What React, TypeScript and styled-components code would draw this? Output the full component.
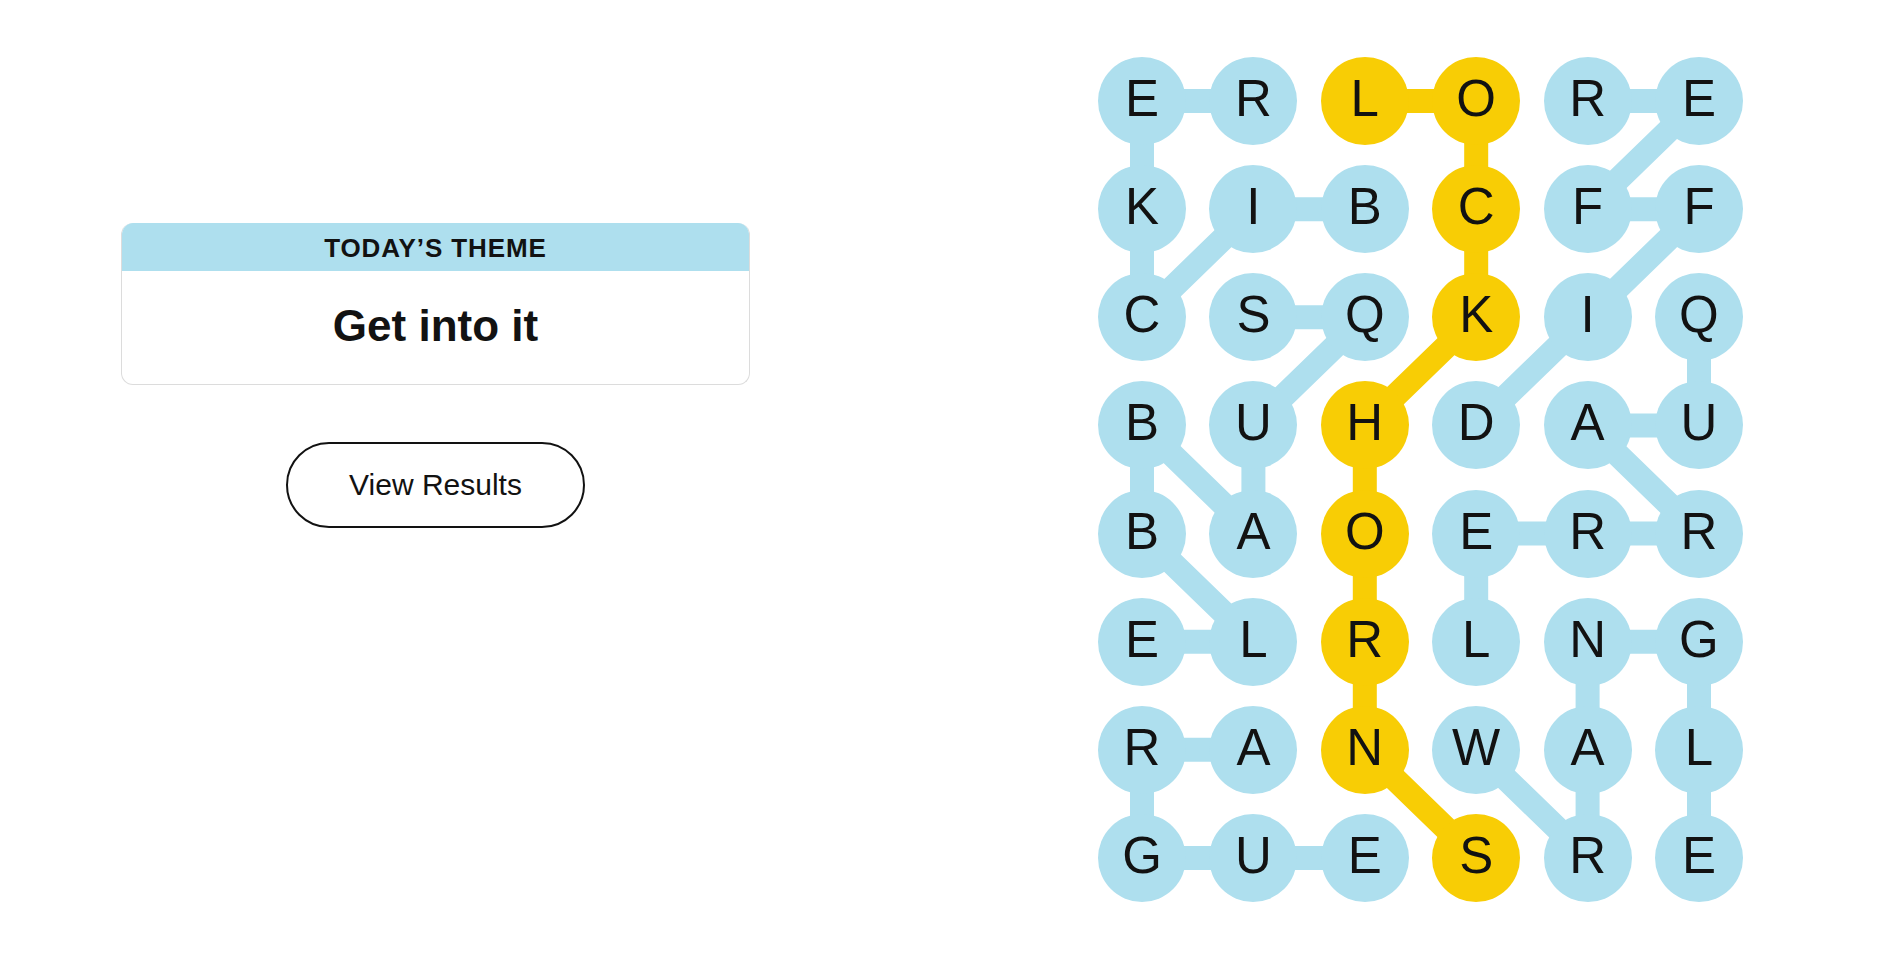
import styled, { createGlobalStyle } from 'styled-components';

const GlobalStyle = createGlobalStyle`
  html, body {
    margin: 0;
    padding: 0;
    background: #fff;
  }
  body {
    font-family: "Liberation Sans", Arial, sans-serif;
    color: #121212;
  }
`;

const BLUE = '#aedfee';
const YELLOW = '#f8cd05';

const CELL = 88;
const COL_GAP = 23.4;
const ROW_GAP = 20.14;

const ROWS = [
  'ERLORE',
  'KIBCFF',
  'CSQKIQ',
  'BUHDAU',
  'BAOERR',
  'ELRLNG',
  'RANWAL',
  'GUESRE',
];

const spangram: [number, number][] = [
  [0, 2], [0, 3], [1, 3], [2, 3], [3, 2], [4, 2], [5, 2], [6, 2], [7, 3],
];

const blueWords: [number, number][][] = [
  // BICKER
  [[1, 2], [1, 1], [2, 0], [1, 0], [0, 0], [0, 1]],
  // DIFFER
  [[3, 3], [2, 4], [1, 5], [1, 4], [0, 5], [0, 4]],
  // SQUABBLE
  [[2, 1], [2, 2], [3, 1], [4, 1], [3, 0], [4, 0], [5, 1], [5, 0]],
  // QUARREL
  [[2, 5], [3, 5], [3, 4], [4, 5], [4, 4], [4, 3], [5, 3]],
  // WRANGLE
  [[6, 3], [7, 4], [6, 4], [5, 4], [5, 5], [6, 5], [7, 5]],
  // ARGUE
  [[6, 1], [6, 0], [7, 0], [7, 1], [7, 2]],
];

const isSpangram = (r: number, c: number) =>
  spangram.some(([sr, sc]) => sr === r && sc === c);

const cx = (c: number) => CELL / 2 + c * (CELL + COL_GAP);
const cy = (r: number) => CELL / 2 + r * (CELL + ROW_GAP);

const BOARD_W = 6 * CELL + 5 * COL_GAP;
const BOARD_H = 8 * CELL + 7 * ROW_GAP;

const toPoints = (path: [number, number][]) =>
  path.map(([r, c]) => `${cx(c)},${cy(r)}`).join(' ');

const App = () => {
  return (
    <>
      <GlobalStyle />
      <Page>
        <Sidebar>
          <ThemeCard>
            <ThemeHeader>TODAY’S THEME</ThemeHeader>
            <ThemeBody>Get into it</ThemeBody>
          </ThemeCard>
          <ResultsButton type="button">View Results</ResultsButton>
        </Sidebar>

        <Board>
          <Links viewBox={`0 0 ${BOARD_W} ${BOARD_H}`} width={BOARD_W} height={BOARD_H}>
            {blueWords.map((w, i) => (
              <polyline
                key={i}
                points={toPoints(w)}
                fill="none"
                stroke={BLUE}
                strokeWidth={24}
                strokeLinejoin="round"
              />
            ))}
            <polyline
              points={toPoints(spangram)}
              fill="none"
              stroke={YELLOW}
              strokeWidth={24}
              strokeLinejoin="round"
            />
          </Links>
          <LetterGrid>
            {ROWS.map((row, r) =>
              row.split('').map((ch, c) => (
                <Letter key={`${r}-${c}`} $found={isSpangram(r, c) ? 'spangram' : 'theme'}>
                  {ch}
                </Letter>
              ))
            )}
          </LetterGrid>
        </Board>
      </Page>
    </>
  );
};

const Page = styled.main`
  display: flex;
  align-items: flex-start;
  padding: 57px 0 0 121px;
  min-height: 980px;
  box-sizing: border-box;
`;

const Sidebar = styled.section`
  width: 629px;
  flex-shrink: 0;
  padding-top: 166px;
  display: flex;
  flex-direction: column;
  align-items: center;
  gap: 57px;
`;

const ThemeCard = styled.div`
  width: 100%;
  border: 1.5px solid #dcdcdc;
  border-top: none;
  border-radius: 12px;
  overflow: hidden;
  box-sizing: border-box;
  height: 162px;
  display: flex;
  flex-direction: column;
`;

const ThemeHeader = styled.div`
  background: ${BLUE};
  height: 48px;
  margin: 0 -1.5px;
  display: flex;
  align-items: center;
  justify-content: center;
  font-weight: 700;
  font-size: 26px;
  letter-spacing: 0.9px;
  padding-top: 2px;
  box-sizing: border-box;
`;

const ThemeBody = styled.div`
  flex: 1;
  display: flex;
  align-items: center;
  justify-content: center;
  padding-bottom: 4px;
  font-weight: 700;
  font-size: 44px;
`;

const ResultsButton = styled.button`
  width: 299px;
  height: 86px;
  border: 2px solid #121212;
  border-radius: 43px;
  background: #fff;
  color: #121212;
  font-family: "Liberation Sans", Arial, sans-serif;
  font-size: 30px;
  cursor: pointer;
`;

const Board = styled.div`
  position: relative;
  flex-shrink: 0;
  margin-left: 348px;
  width: ${BOARD_W}px;
  height: ${BOARD_H}px;
`;

const Links = styled.svg`
  position: absolute;
  inset: 0;
`;

const LetterGrid = styled.div`
  position: relative;
  display: grid;
  grid-template-columns: repeat(6, ${CELL}px);
  grid-auto-rows: ${CELL}px;
  column-gap: ${COL_GAP}px;
  row-gap: ${ROW_GAP}px;
`;

const Letter = styled.div<{ $found: 'spangram' | 'theme' }>`
  width: ${CELL}px;
  height: ${CELL}px;
  border-radius: 50%;
  background: ${(p) => (p.$found === 'spangram' ? YELLOW : BLUE)};
  display: flex;
  align-items: center;
  justify-content: center;
  font-size: 51px;
  line-height: 1;
  padding-bottom: 5px;
  box-sizing: border-box;
  color: #121212;
`;

export default App;
